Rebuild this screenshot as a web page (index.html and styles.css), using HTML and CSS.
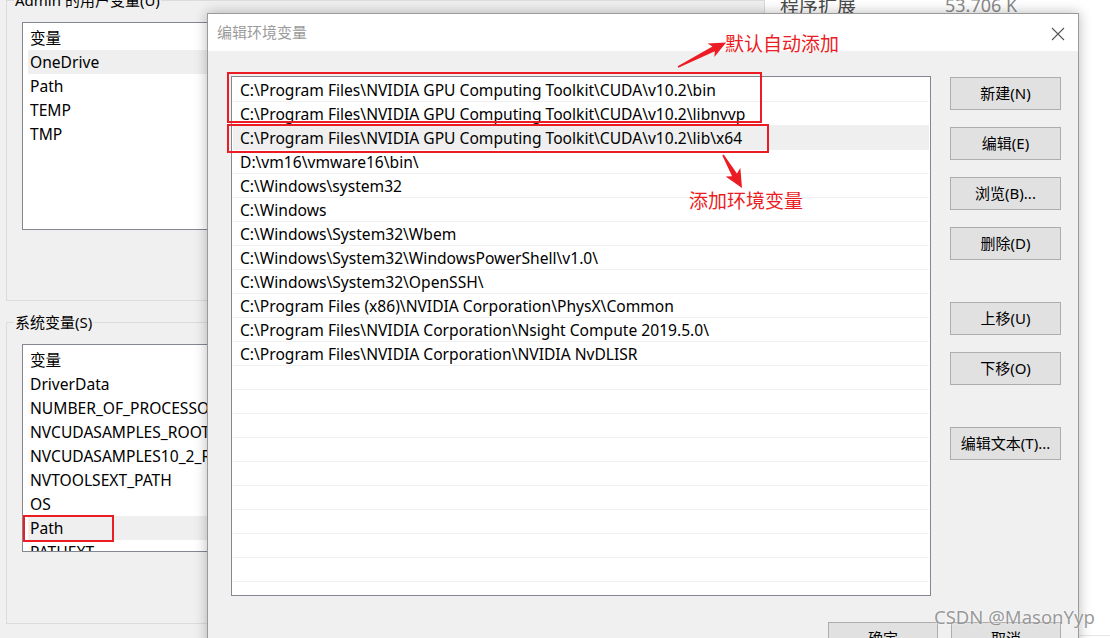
FILE: index.html
```html
<!DOCTYPE html>
<html lang="zh-CN">
<head>
<meta charset="utf-8">
<title>编辑环境变量</title>
<link rel="stylesheet" href="styles.css">
</head>
<body>
<div class="desktop">
  <div class="win-env">
    <div class="group group-user">
      <div class="group-title">Admin 的用户变量(U)</div>
      <div class="listview">
        <div class="lv-row lv-head">变量</div>
        <div class="lv-row sel">OneDrive</div>
        <div class="lv-row">Path</div>
        <div class="lv-row">TEMP</div>
        <div class="lv-row">TMP</div>
      </div>
    </div>
    <div class="group group-sys">
      <div class="group-title">系统变量(S)</div>
      <div class="listview">
        <div class="lv-row lv-head">变量</div>
        <div class="lv-row">DriverData</div>
        <div class="lv-row">NUMBER_OF_PROCESSORS</div>
        <div class="lv-row">NVCUDASAMPLES_ROOT</div>
        <div class="lv-row">NVCUDASAMPLES10_2_ROOT</div>
        <div class="lv-row">NVTOOLSEXT_PATH</div>
        <div class="lv-row">OS</div>
        <div class="lv-row sel">Path</div>
        <div class="lv-row">PATHEXT</div>
      </div>
    </div>
  </div>

  <div class="win-tm">
    <div class="tm-row"><span class="tm-name">程序扩展</span><span class="tm-val">53.706 K</span></div>
  </div>

  <div class="dialog">
    <div class="titlebar">
      <span class="title">编辑环境变量</span>
      <svg class="close" width="14" height="14" viewBox="0 0 14 14"><path d="M1 1 L13 13 M13 1 L1 13" stroke="#555" stroke-width="1.1" fill="none"/></svg>
    </div>
    <div class="dlg-body">
      <div class="dlg-main">
        <div class="pathlist">
          <div class="p-row">C:\Program Files\NVIDIA GPU Computing Toolkit\CUDA\v10.2\bin</div>
          <div class="p-row">C:\Program Files\NVIDIA GPU Computing Toolkit\CUDA\v10.2\libnvvp</div>
          <div class="p-row sel">C:\Program Files\NVIDIA GPU Computing Toolkit\CUDA\v10.2\lib\x64</div>
          <div class="p-row">D:\vm16\vmware16\bin\</div>
          <div class="p-row">C:\Windows\system32</div>
          <div class="p-row">C:\Windows</div>
          <div class="p-row">C:\Windows\System32\Wbem</div>
          <div class="p-row">C:\Windows\System32\WindowsPowerShell\v1.0\</div>
          <div class="p-row">C:\Windows\System32\OpenSSH\</div>
          <div class="p-row">C:\Program Files (x86)\NVIDIA Corporation\PhysX\Common</div>
          <div class="p-row">C:\Program Files\NVIDIA Corporation\Nsight Compute 2019.5.0\</div>
          <div class="p-row">C:\Program Files\NVIDIA Corporation\NVIDIA NvDLISR</div>
          <div class="p-row"></div>
          <div class="p-row"></div>
          <div class="p-row"></div>
          <div class="p-row"></div>
          <div class="p-row"></div>
          <div class="p-row"></div>
          <div class="p-row"></div>
          <div class="p-row"></div>
          <div class="p-row"></div>
          <div class="p-row"></div>
        </div>
        <div class="btn-col">
          <div class="btn">新建(N)</div>
          <div class="btn">编辑(E)</div>
          <div class="btn">浏览(B)...</div>
          <div class="btn">删除(D)</div>
          <div class="btn gap-big">上移(U)</div>
          <div class="btn">下移(O)</div>
          <div class="btn gap-big">编辑文本(T)...</div>
        </div>
      </div>
      <div class="dlg-foot">
        <div class="btn btn-foot">确定</div>
        <div class="btn btn-foot">取消</div>
      </div>
    </div>
  </div>

  <div class="mark mark-1"></div>
  <div class="mark mark-2"></div>
  <div class="mark mark-3"></div>
  <div class="note note-1">默认自动添加</div>
  <div class="note note-2">添加环境变量</div>
  <svg class="arrows" width="1110" height="638" viewBox="0 0 1110 638">
    <polygon fill="#ec1c24" transform="translate(678,67) rotate(-27)" points="0,-0.8 40,-2.6 37,-7.5 54,0 37,7.5 40,2.6 0,0.8"/>
    <polygon fill="#ec1c24" transform="translate(723,155) rotate(60)" points="0,-0.8 23,-2.8 20,-8.5 38,0 20,8.5 23,2.8 0,0.8"/>
  </svg>
  <div class="watermark">CSDN @MasonYyp</div>
</div>
</body>
</html>
```
FILE: styles.css
```css
* { box-sizing: border-box; }
body {
  margin: 0;
  font-family: "Noto Sans", "Noto Sans CJK SC", sans-serif;
  color: #000;
}
.desktop {
  position: relative;
  width: 1110px;
  height: 638px;
  overflow: hidden;
  background: #fff;
}

/* background window: environment variables */
.win-env {
  position: absolute;
  left: 0;
  top: 0;
  width: 765px;
  height: 638px;
  background: #f0f0f0;
  padding-left: 6px;
}
.group {
  border: 1px solid #dcdcdc;
  padding: 0 15px 0 15px;
}
.group-user { padding-bottom: 70px; }
.group-sys { margin-top: 21px; padding-bottom: 71px; }
.group-title {
  width: fit-content;
  margin: -11px 0 0 -8px;
  padding: 0 1px;
  height: 20px;
  line-height: 20px;
  font-size: 15px;
  background: #f0f0f0;
}
.listview {
  margin-top: 12px;
  height: 208px;
  border: 1px solid #828790;
  background: #fff;
  padding: 3px 0 0 5px;
  overflow: hidden;
}
.lv-row {
  height: 24px;
  line-height: 24px;
  padding-left: 2px;
  font-size: 15.6px;
  white-space: nowrap;
}
.lv-row.sel { background: #efefef; }

/* background window: right (white) */
.win-tm {
  position: absolute;
  left: 764px;
  top: 0;
  right: 0;
  height: 636px;
  background: #fff;
  border-left: 1px solid #dadada;
  border-bottom: 1px solid #e6e6e6;
}
.tm-row {
  display: flex;
  margin-top: -8px;
  padding-left: 15px;
  height: 26px;
  line-height: 26px;
  font-size: 19px;
}
.tm-name { color: #4a4a4a; width: 165px; font-family: "Noto Sans CJK SC", sans-serif; }
.tm-val { color: #8a8a8a; font-size: 18px; }

/* dialog */
.dialog {
  position: absolute;
  left: 207px;
  top: 13px;
  width: 872px;
  height: 660px;
  background: #f0f0f0;
  border: 1px solid #9a9a9a;
  box-shadow: 0 0 12px rgba(0, 0, 0, 0.28);
}
.titlebar {
  height: 37px;
  background: #fff;
  display: flex;
  align-items: center;
  justify-content: space-between;
  padding: 0 13px 0 9px;
}
.title { font-size: 15px; color: #9b9b9b; margin-top: -3px; }
.close { margin-top: 3px; }
.dlg-body { padding: 25px 17px 0 23px; }
.dlg-main { display: flex; gap: 19px; }
.pathlist {
  width: 700px;
  height: 520px;
  border: 1px solid #828790;
  background: #fff;
  padding: 1px;
  overflow: hidden;
}
.p-row {
  height: 24px;
  line-height: 25px;
  border-bottom: 1px solid #f0f0f0;
  padding-left: 7px;
  font-size: 15.6px;
  white-space: nowrap;
  overflow: hidden;
}
.p-row.sel { background: #efefef; }
.btn-col {
  display: flex;
  flex-direction: column;
  gap: 17px;
  padding-top: 1px;
}
.btn {
  width: 111px;
  height: 33px;
  border: 1px solid #adadad;
  background: #e1e1e1;
  font-size: 15px;
  line-height: 31px;
  text-align: center;
}
.btn.gap-big { margin-top: 25px; }
.dlg-foot {
  display: flex;
  justify-content: flex-end;
  gap: 13px;
  margin-top: 26px;
}
.btn-foot { width: 110px; }

/* annotations */
.mark {
  position: absolute;
  border: 2px solid #ec1c24;
}
.mark-1 { left: 227px; top: 72px; width: 535px; height: 51px; }
.mark-2 { left: 227px; top: 124px; width: 542px; height: 29px; }
.mark-3 { left: 23px; top: 515px; width: 91px; height: 27px; }
.note {
  position: absolute;
  color: #ec1c24;
  font-family: "Noto Sans CJK SC", sans-serif;
  font-size: 19px;
  line-height: 24px;
}
.note-1 { left: 725px; top: 31px; }
.note-2 { left: 689px; top: 188px; }
.arrows { position: absolute; left: 0; top: 0; }
.watermark {
  position: absolute;
  left: 934px;
  top: 605px;
  font-size: 18.5px;
  line-height: 24px;
  color: rgba(120, 120, 120, 0.75);
  text-shadow: 0 0 2px #fff;
}
```
